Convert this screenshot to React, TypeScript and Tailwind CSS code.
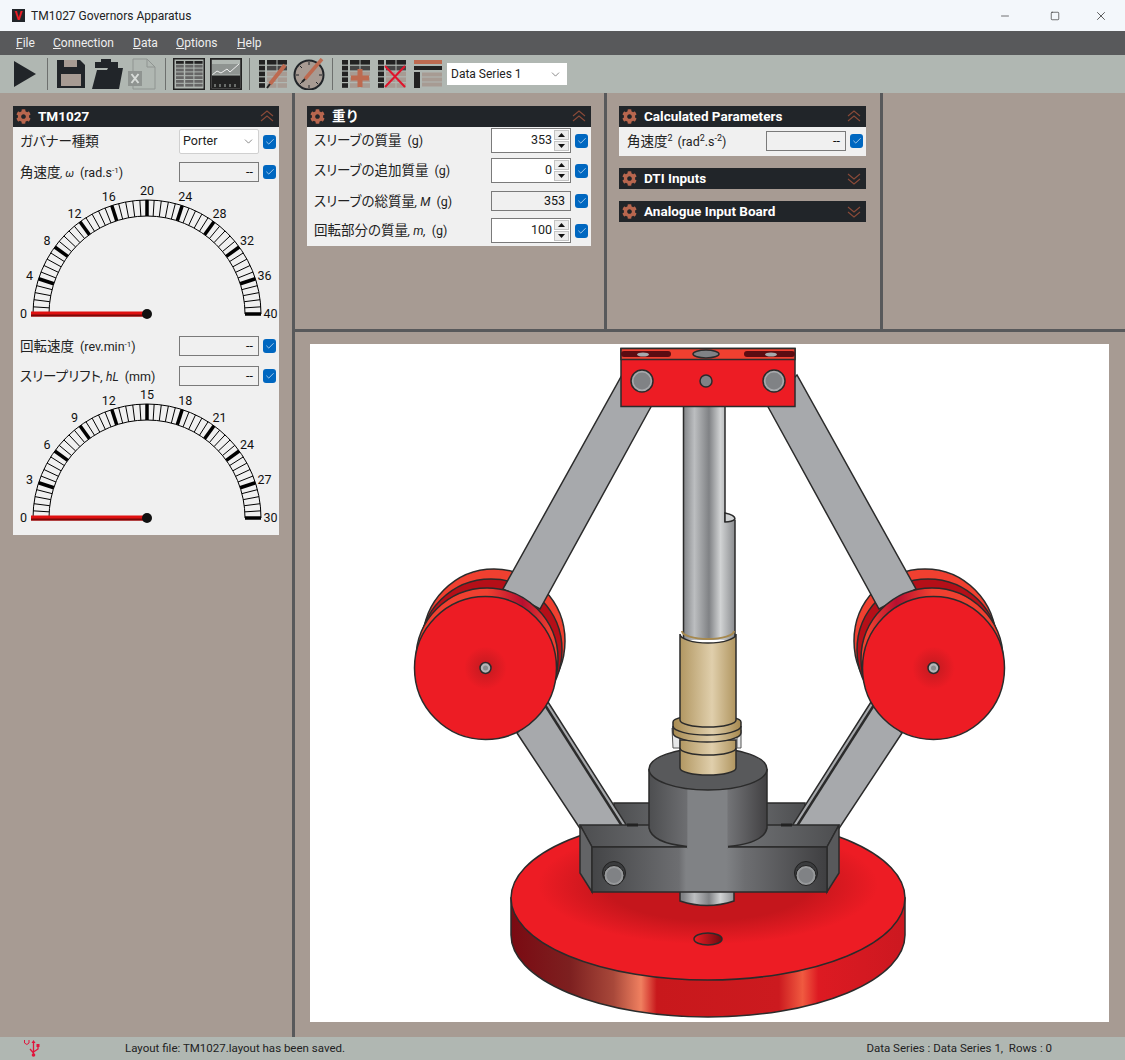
import type { ReactNode } from 'react';
import { ChevronDown, Check, Minus, Square, X } from 'lucide-react';
import { FaCog } from 'react-icons/fa';

const font = { fontFamily: 'Roboto, "Noto Sans CJK JP", sans-serif' };

function Header({ title, open = true }: { title: string; open?: boolean }) {
  return (
    <div className="flex h-[21px] items-center bg-[#212529] pl-[3px] pr-[5px]">
      <FaCog className="h-[15px] w-[15px] text-[#b8664e]" />
      <span className="ml-[7px] flex-1 text-[13.5px] font-bold text-white">{title}</span>
      <svg width="14" height="13" viewBox="0 0 14 13" fill="none" stroke="#8a4a38" strokeWidth="1.1">
        <path d={open ? 'M1 6 L7 1 L13 6 M1 11 L7 6 L13 11' : 'M1 2 L7 7 L13 2 M1 7 L7 12 L13 7'} />
      </svg>
    </div>
  );
}

function Tick() {
  return (
    <span className="ml-1 flex h-[14px] w-[13px] shrink-0 items-center justify-center rounded-[3px] bg-[#0067c0]">
      <Check className="h-[10px] w-[10px] text-white" strokeWidth={1.5} />
    </span>
  );
}

function Readout({ value = '--' }: { value?: string }) {
  return (
    <div className="flex h-[20px] w-[80px] items-center justify-end border border-[#7a7a7a] bg-[#f0f0f0] pr-[5px] text-[12.5px] text-[#111]">
      {value}
    </div>
  );
}

function Spin({ value }: { value: string }) {
  return (
    <div className="flex h-[25px] w-[80px] items-center justify-end border border-[#7a7a7a] bg-white text-[12.5px] text-[#222]">
      {value}
      <div className="ml-[2px] mr-px flex h-[21px] w-[15px] flex-col gap-px">
        <div className="flex flex-1 items-center justify-center border border-[#c4c4c4] bg-[#ececec]">
          <svg width="7" height="4" viewBox="0 0 7 4"><path d="M0 4 L3.5 0 L7 4 Z" fill="#111" /></svg>
        </div>
        <div className="flex flex-1 items-center justify-center border border-[#c4c4c4] bg-[#ececec]">
          <svg width="7" height="4" viewBox="0 0 7 4"><path d="M0 0 L3.5 4 L7 0 Z" fill="#111" /></svg>
        </div>
      </div>
    </div>
  );
}

function Row({ label, children, className }: { label: ReactNode; children: ReactNode; className: string }) {
  return (
    <div className={`flex items-center pr-[3px] ${className}`}>
      <span className="flex-1 whitespace-nowrap text-[13.5px] text-[#222] [font-feature-settings:'palt']">{label}</span>
      {children}
      <Tick />
    </div>
  );
}

function Gauge({ max, className }: { max: number; className?: string }) {
  const cx = 134;
  const cy = 130;
  const lines = [];
  for (let i = 0; i <= 50; i++) {
    const a = Math.PI * (1 - i / 50);
    const major = i % 5 === 0;
    lines.push(
      <line
        key={i}
        x1={cx + 98 * Math.cos(a)}
        y1={cy - 98 * Math.sin(a)}
        x2={cx + 114 * Math.cos(a)}
        y2={cy - 114 * Math.sin(a)}
        stroke="#000"
        strokeWidth={major ? 3.5 : 1}
      />,
    );
  }
  const labels = [];
  for (let i = 0; i <= 10; i++) {
    const a = Math.PI * (1 - i / 10);
    labels.push(
      <text key={i} x={cx + 123.5 * Math.cos(a)} y={cy - 123.5 * Math.sin(a) + 4} textAnchor="middle" fontSize="12.5" fill="#111">
        {(max / 10) * i}
      </text>,
    );
  }
  return (
    <svg width="266" height="141" viewBox="0 0 266 141" className={`overflow-visible ${className}`}>
      <path d={`M${cx - 114} ${cy} A114 114 0 0 1 ${cx + 114} ${cy}`} fill="none" stroke="#000" />
      <path d={`M${cx - 98} ${cy} A98 98 0 0 1 ${cx + 98} ${cy}`} fill="none" stroke="#000" />
      {lines}
      {labels}
      <rect x="18" y={cy - 2.5} width="116" height="5" fill="#e01010" />
      <rect x="18" y={cy + 0.5} width="116" height="2" fill="#7a0808" />
      <circle cx={cx} cy={cy} r="5" fill="#111" />
    </svg>
  );
}

function LeftPanel() {
  return (
    <div className="w-[266px] bg-[#f0f0f0] pb-[6px]">
      <Header title="TM1027" />
      <div className="pl-[7px] pt-[2px]">
        <Row label="ガバナー種類" className="h-[25px]">
          <div className="flex h-[25px] w-[80px] items-center justify-between rounded-[2px] border border-[#d0d0d0] bg-white pl-[3px] pr-[3px] text-[12.5px] text-[#222]">
            Porter
            <ChevronDown className="h-[13px] w-[13px] text-[#555]" strokeWidth={1.25} />
          </div>
        </Row>
        <Row label={<>角速度<i className="text-[11px]">, ω</i><span className="ml-[6px] text-[12.5px]">(rad.s<sup className="text-[8px]">-1</sup>)</span></>} className="mt-[8px] h-[20px]">
          <Readout />
        </Row>
      </div>
      <Gauge max={40} className="mt-[2px] block" />
      <div className="pl-[7px] pt-[11px]">
        <Row label={<>回転速度<span className="ml-[6px] text-[12.5px]">(rev.min<sup className="text-[8px]">-1</sup>)</span></>} className="h-[20px]">
          <Readout />
        </Row>
        <Row label={<>スリープリフト<i className="text-[12px]">, hL</i><span className="ml-[6px] text-[12.5px]">(mm)</span></>} className="mt-[10px] h-[20px]">
          <Readout />
        </Row>
      </div>
      <Gauge max={30} className="mt-[2px] block" />
    </div>
  );
}

function MassPanel() {
  return (
    <div className="w-[284px] bg-[#f0f0f0]">
      <Header title="重り" />
      <div className="pl-[7px] pt-px pb-[3px]">
        <Row label={<>スリーブの質量<span className="ml-[6px] text-[12.5px]">(g)</span></>} className="h-[25px]"><Spin value="353" /></Row>
        <Row label={<>スリーブの追加質量<span className="ml-[6px] text-[12.5px]">(g)</span></>} className="mt-[5px] h-[25px]"><Spin value="0" /></Row>
        <Row label={<>スリーブの総質量<i className="text-[12px]">, M</i><span className="ml-[6px] text-[12.5px]">(g)</span></>} className="mt-[8px] h-[20px]"><Readout value="353" /></Row>
        <Row label={<>回転部分の質量<i className="text-[12px]">, m,</i><span className="ml-[6px] text-[12.5px]">(g)</span></>} className="mt-[7px] h-[25px]"><Spin value="100" /></Row>
      </div>
    </div>
  );
}

function ParamsColumn() {
  return (
    <div className="flex w-[247px] flex-col">
      <Header title="Calculated Parameters" />
      <div className="bg-[#f0f0f0] pl-[8px] pt-[4px] pb-[5px]">
        <Row label={<>角速度<sup className="text-[9px]">2</sup><span className="ml-[5px] text-[12.5px]">(rad<sup className="text-[9px]">2</sup>.s<sup className="text-[9px]">-2</sup>)</span></>} className="h-[20px]">
          <Readout />
        </Row>
      </div>
      <div className="mt-[12px]"><Header title="DTI Inputs" open={false} /></div>
      <div className="mt-[12px]"><Header title="Analogue Input Board" open={false} /></div>
    </div>
  );
}

function Sep({ className }: { className: string }) {
  return <div className={`h-[32px] w-px shrink-0 bg-[#6d706e] ${className}`} />;
}

function TableIcon({ className }: { className?: string }) {
  const cells = [];
  for (let r = 0; r < 7; r++) {
    for (let c = 0; c < 3; c++) {
      cells.push(<rect key={`${r}-${c}`} x={3 + c * 9.2} y={3 + r * 3.8} width={c === 0 ? 7.8 : 8.2} height="2.8" fill={r === 0 ? '#222' : '#666'} />);
    }
  }
  return (
    <svg width="32" height="32" viewBox="0 0 32 32" className={className}>
      <rect x="0.75" y="0.75" width="30.5" height="30.5" fill="#b0b7b2" stroke="#222" strokeWidth="1.5" />
      {cells}
    </svg>
  );
}

function MiniGrid({ children, className }: { children?: ReactNode; className?: string }) {
  const cells = [];
  for (let r = 0; r < 5; r++) {
    const fill = r === 0 ? '#222' : r === 1 ? '#444' : '#a79b93';
    cells.push(<rect key={`a${r}`} x="0" y={r * 5.8} width="6" height="4.6" fill="#222" />);
    cells.push(<rect key={`b${r}`} x="8" y={r * 5.8} width="9.5" height="4.6" fill={fill} />);
    cells.push(<rect key={`c${r}`} x="18.5" y={r * 5.8} width="9.5" height="4.6" fill={fill} />);
  }
  return (
    <svg width="29" height="29" viewBox="0 0 29 29" className={className}>
      {cells}
      {children}
    </svg>
  );
}

function Toolbar() {
  return (
    <div className="flex h-[38px] items-center bg-[#b0b7b2] pl-[14px]">
      <svg width="22" height="26" viewBox="0 0 22 26"><path d="M0 0 L22 13 L0 26 Z" fill="#212529" /></svg>
      <Sep className="ml-[11px]" />
      <svg width="28" height="28" viewBox="0 0 28 28" className="ml-[9px]">
        <path d="M0 0 H23 L28 5 V28 H0 Z" fill="#212529" />
        <rect x="7" y="0" width="13" height="7" fill="#a79b93" />
        <rect x="4" y="14" width="20" height="12" fill="#a79b93" />
      </svg>
      <svg width="31" height="30" viewBox="0 0 31 30" className="ml-[7px]">
        <path d="M3 3 H9 V0 H19 V3 H26 V9 H3 Z" fill="#212529" />
        <path d="M5 11 H15 L16 9 H31 L27 30 H0 Z" fill="#212529" />
      </svg>
      <svg width="28" height="32" viewBox="0 0 28 32" className="ml-[5px]">
        <path d="M5 1 H19 L27 9 V31 H5 Z" fill="#b0b7b2" stroke="#8f9491" />
        <path d="M19 1 V9 H27" fill="none" stroke="#8f9491" />
        <rect x="0" y="13" width="14" height="15" fill="#8f9491" />
        <path d="M3.5 16 L10.5 25 M10.5 16 L3.5 25" stroke="#d8dcd9" strokeWidth="2" />
      </svg>
      <Sep className="ml-[9px]" />
      <TableIcon className="ml-[7px]" />
      <svg width="32" height="32" viewBox="0 0 32 32" className="ml-[5px]">
        <rect x="0.75" y="0.75" width="30.5" height="30.5" fill="#666" stroke="#222" strokeWidth="1.5" />
        <rect x="2" y="2" width="28" height="4" fill="#b0b7b2" />
        <rect x="2" y="6" width="28" height="11" fill="#8f9491" />
        <path d="M2 17 L7 13 L11 15 L17 11 L20 14 L29 6" fill="none" stroke="#eee" strokeWidth="1" />
        <rect x="2" y="17" width="28" height="13" fill="#222" />
        <path d="M2 17 H30 M5 29 V26 M10 29 V26 M15 29 V26 M20 29 V26 M25 29 V26" stroke="#b0b7b2" />
      </svg>
      <Sep className="ml-[7px]" />
      <MiniGrid className="ml-[9px]">
        <path d="M11 24 L26 5" stroke="#bd6a50" strokeWidth="4" />
        <path d="M8 28 L11 24" stroke="#222" strokeWidth="2" />
      </MiniGrid>
      <svg width="32" height="32" viewBox="0 0 32 32" className="ml-[5px]">
        <circle cx="16" cy="17" r="14.5" fill="#a79b93" stroke="#212529" strokeWidth="2" />
        <path d="M16 4 V7 M29 17 H26 M16 30 V27 M3 17 H6 M7 8 L9 10 M25 26 L23 24 M7 26 L9 24" stroke="#212529" />
        <path d="M12 21 L29 1" stroke="#bd6a50" strokeWidth="3.5" />
        <path d="M9 24 L12 21" stroke="#222" strokeWidth="2" />
      </svg>
      <Sep className="ml-[7px]" />
      <MiniGrid className="ml-[9px]">
        <path d="M18 9 V27 M9 18 H27" stroke="#bd6a50" strokeWidth="5" />
      </MiniGrid>
      <MiniGrid className="ml-[7px]">
        <path d="M7 6 L27 27 M27 6 L7 27" stroke="#e0142c" strokeWidth="2" />
      </MiniGrid>
      <svg width="29" height="29" viewBox="0 0 29 29" className="ml-[7px]">
        <rect x="0" y="0" width="28" height="4" fill="#bd6a50" />
        <rect x="0" y="6" width="28" height="4" fill="#222" />
        <rect x="0" y="12" width="6" height="16" fill="#222" />
        <path d="M8 14.5 H28 M8 19.5 H28 M8 24.5 H28" stroke="#a79b93" strokeWidth="4" />
      </svg>
      <div className="ml-[4px] flex h-[22px] w-[120px] items-center justify-between bg-white pl-[4px] pr-[5px] text-[12px] text-[#222]">
        Data Series 1
        <ChevronDown className="h-[13px] w-[13px] text-[#555]" strokeWidth={1.25} />
      </div>
    </div>
  );
}

function Disc() {
  return (
    <>
      <ellipse cx="494" cy="641" rx="71" ry="72" fill="#f04030" stroke="#2b2b2b" strokeWidth="1.5" />
      <ellipse cx="491" cy="650" rx="71" ry="71" fill="#b50f18" stroke="#2b2b2b" strokeWidth="1.5" />
      <polygon points="622,375 652,405 540,609 503,589" fill="#a7a9ac" stroke="#2b2b2b" strokeWidth="1.5" />
      <polygon points="517,733 581,830 627,826 548,702" fill="#a7a9ac" stroke="#2b2b2b" strokeWidth="1.5" />
      <path d="M545 705 L622 826" stroke="#2b2b2b" strokeWidth="2.5" />
      <ellipse cx="487" cy="659" rx="71" ry="71" fill="url(#band)" stroke="#2b2b2b" strokeWidth="1.5" />
      <ellipse cx="485.5" cy="668" rx="71" ry="71.5" fill="url(#discFace)" stroke="#2b2b2b" strokeWidth="1.5" />
      <circle cx="485.5" cy="668" r="5.5" fill="#b5b6b8" stroke="#2b2b2b" strokeWidth="1.5" />
      <circle cx="485.5" cy="668" r="2.5" fill="#8a8c8e" />
    </>
  );
}

function Bolt({ x }: { x: number }) {
  return (
    <>
      <circle cx={x} cy="873" r="11.5" fill="#3a3b3d" stroke="#222" />
      <circle cx={x} cy="875.5" r="10" fill="#97999b" stroke="#222" />
      <circle cx={x} cy="875.5" r="7.5" fill="#808285" />
    </>
  );
}

function Machine() {
  const line = { stroke: '#2b2b2b', strokeWidth: 1.5 };
  return (
    <svg width="799" height="678" viewBox="310 344 799 678" className="block bg-white">
      <defs>
        <linearGradient id="baseSide" x1="511" x2="905" y1="0" y2="0" gradientUnits="userSpaceOnUse">
          <stop offset="0" stopColor="#7a0a12" />
          <stop offset="0.15" stopColor="#7d2020" />
          <stop offset="0.26" stopColor="#a8483a" />
          <stop offset="0.33" stopColor="#f08060" />
          <stop offset="0.37" stopColor="#c8181c" />
          <stop offset="0.68" stopColor="#cc1a1f" />
          <stop offset="0.74" stopColor="#f05a40" />
          <stop offset="0.78" stopColor="#dd1a22" />
          <stop offset="1" stopColor="#cc1820" />
        </linearGradient>
        <radialGradient id="baseTop" cx="708" cy="885" r="170" gradientUnits="userSpaceOnUse" gradientTransform="translate(0 575) scale(1 0.35)">
          <stop offset="0.6" stopColor="#c5161c" />
          <stop offset="1" stopColor="#ed1c24" />
        </radialGradient>
        <radialGradient id="discFace">
          <stop offset="0" stopColor="#c01a20" />
          <stop offset="0.3" stopColor="#ed1c24" />
        </radialGradient>
        <linearGradient id="band" x1="0" x2="1" y1="0" y2="0">
          <stop offset="0.1" stopColor="#f04030" />
          <stop offset="0.5" stopColor="#f04030" />
          <stop offset="0.75" stopColor="#b80f30" />
          <stop offset="0.95" stopColor="#f04030" />
        </linearGradient>
        <linearGradient id="steel" x1="683" x2="735" y1="0" y2="0" gradientUnits="userSpaceOnUse">
          <stop offset="0" stopColor="#808285" />
          <stop offset="0.22" stopColor="#bcbec0" />
          <stop offset="0.5" stopColor="#808285" />
          <stop offset="0.72" stopColor="#d1d3d4" />
          <stop offset="1" stopColor="#8a8c8f" />
        </linearGradient>
        <linearGradient id="brass" x1="672" x2="741" y1="0" y2="0" gradientUnits="userSpaceOnUse">
          <stop offset="0" stopColor="#a6894f" />
          <stop offset="0.58" stopColor="#e0cfac" />
          <stop offset="1" stopColor="#a6894f" />
        </linearGradient>
        <linearGradient id="front" x1="592" x2="827" y1="0" y2="0" gradientUnits="userSpaceOnUse">
          <stop offset="0" stopColor="#444547" />
          <stop offset="0.37" stopColor="#6d6e71" />
          <stop offset="0.4" stopColor="#808285" />
          <stop offset="0.57" stopColor="#808285" />
          <stop offset="0.65" stopColor="#6d6e71" />
          <stop offset="1" stopColor="#3f3f41" />
        </linearGradient>
        <linearGradient id="column" x1="649" x2="767" y1="0" y2="0" gradientUnits="userSpaceOnUse">
          <stop offset="0" stopColor="#4d4e50" />
          <stop offset="0.32" stopColor="#6d6e71" />
          <stop offset="0.33" stopColor="#808285" />
          <stop offset="0.66" stopColor="#808285" />
          <stop offset="0.67" stopColor="#737477" />
          <stop offset="1" stopColor="#414042" />
        </linearGradient>
        <linearGradient id="ironTop" x1="0" x2="1" y1="0" y2="0">
          <stop offset="0" stopColor="#4d4e50" />
          <stop offset="0.5" stopColor="#7a7c7f" />
          <stop offset="1" stopColor="#4d4e50" />
        </linearGradient>
        <linearGradient id="hole" x1="0" x2="1" y1="0" y2="0">
          <stop offset="0" stopColor="#ed1c24" />
          <stop offset="1" stopColor="#6d0a10" />
        </linearGradient>
      </defs>

      {/* base plate */}
      <path d="M511 898 V935 A197 82 0 0 0 905 935 V898 Z" fill="url(#baseSide)" {...line} />
      <ellipse cx="708" cy="898" rx="197" ry="82" fill="url(#baseTop)" {...line} />
      <ellipse cx="708" cy="939" rx="14" ry="6" fill="url(#hole)" {...line} />

      {/* stem under the block */}
      <path d="M680 888 V901 Q707 910 734 901 V888 Z" fill="url(#steel)" {...line} />

      {/* block back */}
      <rect x="614" y="803" width="191" height="24" fill="url(#ironTop)" {...line} />

      {/* arms and weights */}
      <Disc />
      <g transform="translate(1419 0) scale(-1 1)">
        <Disc />
      </g>

      {/* block */}
      <polygon points="580,825 839,825 827,847 592,847" fill="url(#ironTop)" {...line} />
      <polygon points="580,825 592,847 592,892 580,873" fill="#636466" {...line} />
      <polygon points="839,825 827,847 827,892 839,873" fill="#58595b" {...line} />
      <rect x="592" y="847" width="235" height="45" fill="url(#front)" />
      <path d="M592 847 H687 M728 847 H827 M827 847 V892 H592 V847" fill="none" {...line} />
      <path d="M627 825 H638 M781 825 H792" stroke="#222" strokeWidth="3" />
      <Bolt x={614} />
      <Bolt x={806} />

      {/* column */}
      <path d="M649 769 V828 Q652 843 687 846 V849 H728 V846 Q764 843 767 828 V769 Z" fill="url(#column)" />
      <path d="M649 769 V828 Q652 843 687 846.5 M767 769 V828 Q764 843 728 846.5" fill="none" {...line} />
      <ellipse cx="708" cy="769" rx="59" ry="21" fill="#58595b" {...line} />

      {/* shaft */}
      <path d="M683.5 406 H725 V513 Q735 515 735 520 V640 H683.5 Z" fill="url(#steel)" />
      <path d="M683.5 406 V640 M725 406 V522 M735 520 V640" fill="none" {...line} />
      <path d="M725 513 Q735 515 735 519 Q732 522 725 522 Z" fill="#d1d3d4" {...line} />

      {/* sleeve */}
      <path d="M672 728 H680 V748 H673 Z M737 730 H741 V748 H737 Z" fill="#e6e7e8" stroke="#555" />
      <path d="M680 740 V768 A28 7 0 0 0 736 768 V740 Z" fill="url(#brass)" {...line} />
      <path d="M680 748 A28 7 0 0 0 736 748 M680 748" fill="none" {...line} />
      <path d="M673 722 V733 A34 9 0 0 0 741 733 V722 A34 7 0 0 0 673 722 Z" fill="url(#brass)" {...line} />
      <path d="M673 726 A34 9 0 0 0 741 726" fill="none" {...line} />
      <path d="M680 634 V720 A28 7 0 0 0 736 720 V634 A28 9 0 0 1 680 634 Z" fill="url(#brass)" {...line} />
      <path d="M682 631 A26 8 0 0 0 734 631" fill="none" stroke="#a6894f" strokeWidth="2" />

      {/* top carrier */}
      <rect x="621" y="348.5" width="174" height="58" fill="#ed1c24" {...line} />
      <rect x="621" y="348.5" width="174" height="11" fill="#f04030" {...line} />
      <rect x="621" y="351" width="50" height="6" rx="3" fill="#5c0c12" />
      <rect x="744" y="351" width="51" height="6" rx="3" fill="#5c0c12" />
      <ellipse cx="643" cy="354.5" rx="6" ry="2" fill="#a7a9ac" />
      <ellipse cx="771" cy="354.5" rx="6" ry="2" fill="#a7a9ac" />
      <ellipse cx="706" cy="354" rx="13" ry="4" fill="#808285" {...line} />
      {[642, 774].map((x) => (
        <g key={x}>
          <circle cx={x} cy="381" r="11" fill="#a7a9ac" {...line} />
          <circle cx={x} cy="381" r="8.5" fill="#808285" />
        </g>
      ))}
      <circle cx="706" cy="381" r="6" fill="#808285" {...line} />
    </svg>
  );
}

export default function App() {
  return (
    <div className="flex h-[1060px] w-[1125px] flex-col overflow-hidden bg-[#a79b93]" style={font}>
      <div className="flex h-[31px] items-center bg-[#f3f7fb] pl-[12px]">
        <span className="flex h-[13px] w-[13px] items-center justify-center bg-[#212529] text-[12px] font-bold leading-none text-[#ed1c24]">V</span>
        <span className="ml-[6px] flex-1 text-[12px] text-[#222]">TM1027 Governors Apparatus</span>
        <Minus className="mr-[39px] h-[12px] w-[12px] text-[#222]" strokeWidth={1.25} />
        <Square className="mr-[34px] h-[10px] w-[10px] text-[#222]" strokeWidth={1.5} />
        <X className="mr-[17px] h-[14px] w-[14px] text-[#222]" strokeWidth={1.25} />
      </div>

      <div className="flex h-[24px] items-center bg-[#58595b] pl-[16px] text-[12px] text-[#eee]">
        <span className="w-[37px]"><u>F</u>ile</span>
        <span className="w-[80px]"><u>C</u>onnection</span>
        <span className="w-[43px]"><u>D</u>ata</span>
        <span className="w-[61px]"><u>O</u>ptions</span>
        <span><u>H</u>elp</span>
      </div>

      <Toolbar />

      <div className="flex min-h-0 flex-1">
        <div className="w-[292px] shrink-0 pl-[13px] pt-[13px]">
          <LeftPanel />
        </div>
        <div className="w-[3px] shrink-0 bg-[#58595b]" />
        <div className="flex min-w-0 flex-1 flex-col">
          <div className="flex h-[236px] shrink-0">
            <div className="w-[309px] shrink-0 pl-[12px] pt-[13px]">
              <MassPanel />
            </div>
            <div className="w-[3px] shrink-0 bg-[#58595b]" />
            <div className="w-[273px] shrink-0 pl-[12px] pt-[13px]">
              <ParamsColumn />
            </div>
            <div className="w-[3px] shrink-0 bg-[#58595b]" />
          </div>
          <div className="h-[3px] shrink-0 bg-[#58595b]" />
          <div className="pl-[15px] pt-[12px]">
            <Machine />
          </div>
        </div>
      </div>

      <div className="flex h-[23px] items-center bg-[#b0b7b2] pl-[24px] pr-[73px] text-[11.5px] text-[#222]">
        <svg width="16" height="17" viewBox="0 0 16 17" fill="none" stroke="#e0143c" strokeWidth="1.3">
          <path d="M9.5 2 V15 M9.5 12 L14 9 V6 M9.5 13 L6 9" />
          <path d="M0.5 0 V3 Q3 6 5 3 V0" strokeWidth="1" />
          <path d="M9.5 0 L11.5 3 H7.5 Z" fill="#e0143c" stroke="none" />
          <rect x="12.5" y="4" width="3" height="3" fill="#e0143c" stroke="none" />
          <circle cx="9.5" cy="15" r="1.8" fill="#e0143c" stroke="none" />
        </svg>
        <span className="ml-[85px] flex-1">Layout file: TM1027.layout has been saved.</span>
        <span className="whitespace-pre">Data Series : Data Series 1,  Rows : 0</span>
      </div>
    </div>
  );
}
